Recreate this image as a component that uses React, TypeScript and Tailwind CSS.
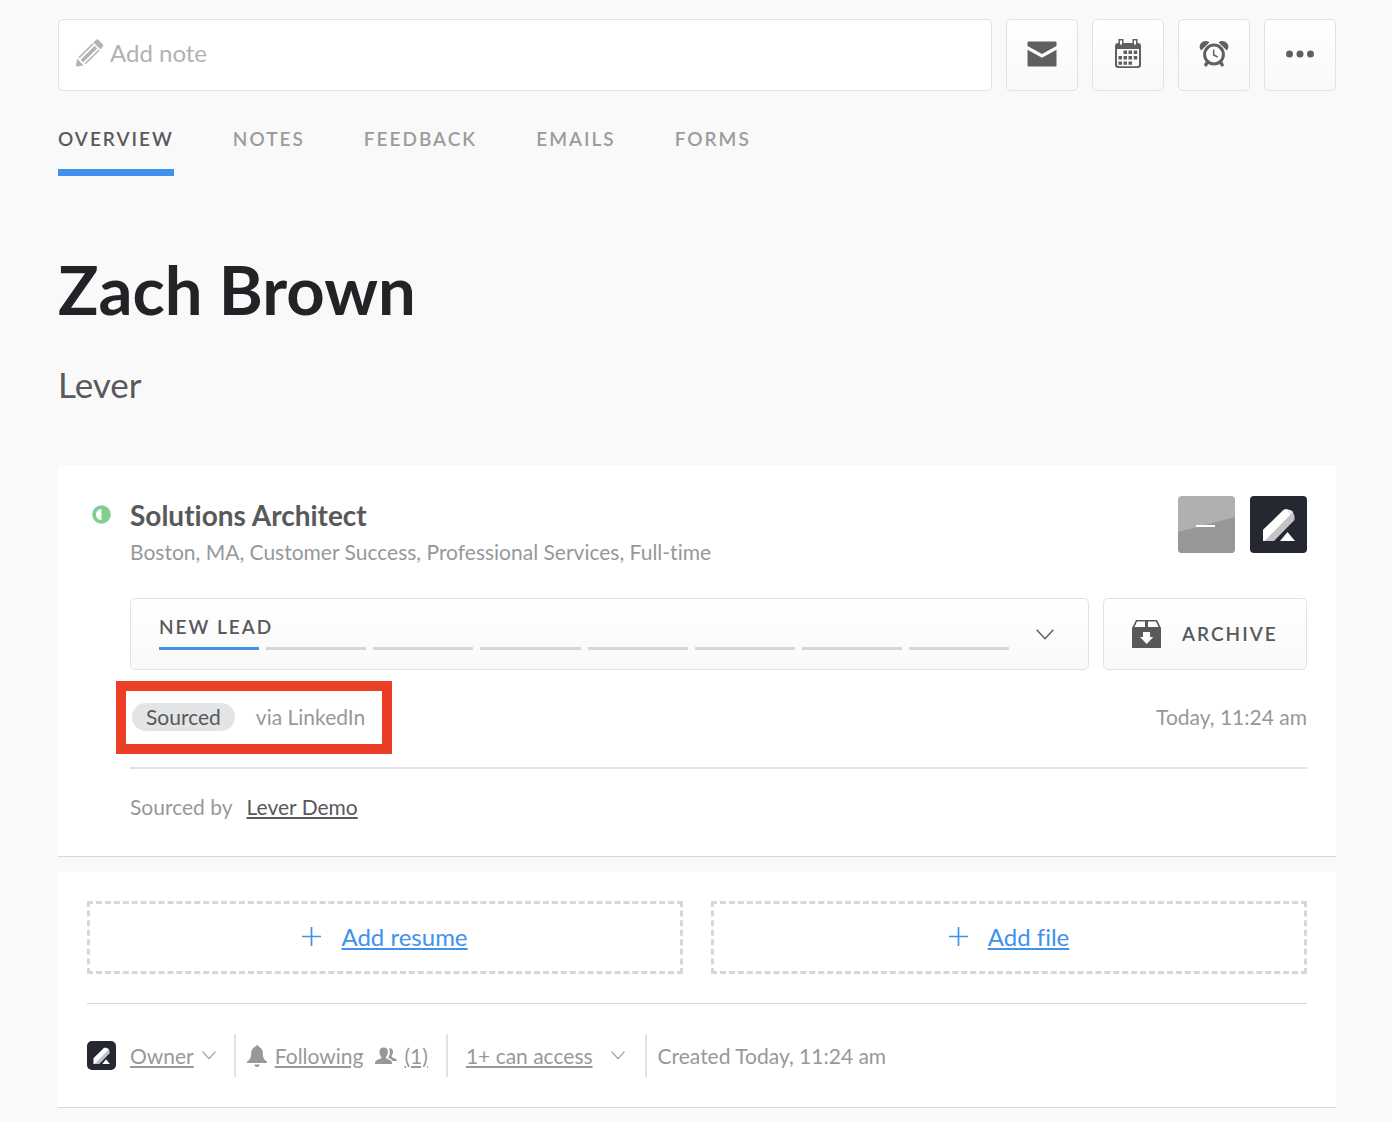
import React from 'react';
import clsx from 'clsx';

const tabs = ['Overview', 'Notes', 'Feedback', 'Emails', 'Forms'];
const stages = [
    'New lead',
    'Reached out',
    'Responded',
    'Phone screen',
    'On-site',
    'Reference check',
    'Offer',
    'Hired',
];

const PencilIcon: React.FC = () => (
    <svg
        width="28"
        height="28"
        viewBox="0 0 28 28"
        fill="currentColor"
        aria-hidden="true"
    >
        <path d="M0 27.500 1 19.500 7.500 26.500Z" />
        <path
            d="M3 18.800 17 4.900M9.200 24.800 23.200 11"
            fill="none"
            stroke="currentColor"
            strokeWidth="1.500"
        />
        <path
            d="M6 22 20 8"
            fill="none"
            stroke="currentColor"
            strokeWidth="3.800"
        />
        <path d="M17.300 3.400 20 .9Q21.300-.2 22.600 1L26.800 5.200Q27.800 6.400 26.800 7.600L24.600 10.200Z" />
    </svg>
);

const MailIcon: React.FC = () => (
    <svg
        width="30"
        height="26"
        viewBox="0 0 30 26"
        fill="currentColor"
        aria-hidden="true"
    >
        <path d="M1.500.5h27Q29.500.5 29.500 1.500V5L15 13 .5 5V1.500Q.5.5 1.500.5Z" />
        <path d="M.5 8.800 15 16.800 29.500 8.800V24.500Q29.500 25.500 28.500 25.500H1.500Q.5 25.500.5 24.500Z" />
    </svg>
);

const CalendarIcon: React.FC = () => (
    <svg
        width="26"
        height="30"
        viewBox="0 0 26 30"
        fill="currentColor"
        aria-hidden="true"
    >
        <path
            fillRule="evenodd"
            d="M3 4h20q3 0 3 3v19q0 3-3 3H3q-3 0-3-3V7q0-3 3-3ZM2 10v15.500Q2 27.300 3.800 27.300H22.200Q24 27.300 24 25.500V10Z"
        />
        <path d="M3.500 0h5v6.500h-5ZM17.500 0h5v6.500h-5Z" />
        <path d="M5 1.500h2v4H5ZM19 1.500h2v4H19Z" fill="#fff" />
        <path d="M8.500 11.500h3.500v3.500H8.500ZM13.500 11.500H17v3.500h-3.500ZM18.700 11.500h3.500v3.500h-3.500ZM3.500 17H7v3.500H3.500ZM8.500 17h3.500v3.500H8.500ZM13.500 17H17v3.500h-3.500ZM18.700 17h3.500v3.500h-3.500ZM3.500 22.500H7v3.200H3.500ZM8.500 22.500h3.500v3.200H8.500ZM13.500 22.500H17v3.200h-3.500Z" />
    </svg>
);

const AlarmIcon: React.FC = () => (
    <svg
        width="30"
        height="28"
        viewBox="0 0 30 28"
        fill="none"
        stroke="currentColor"
        aria-hidden="true"
    >
        <circle cx="15" cy="14.500" r="9.400" strokeWidth="3" />
        <path d="M14.700 9.500v5.500l4 2" strokeWidth="1.500" />
        <path
            d="M8.300 22.300 6.800 24.800M21.700 22.300l1.500 2.500"
            strokeWidth="3.400"
            strokeLinecap="round"
        />
        <path
            d="M2.200 10.500C-.5 7 .5 3.500 3.800 1.700 6.500.5 9 1 10.300 2.500Z"
            fill="currentColor"
            stroke="none"
        />
        <path
            d="M27.800 10.500C30.500 7 29.500 3.500 26.200 1.700 23.500.5 21 1 19.700 2.500Z"
            fill="currentColor"
            stroke="none"
        />
    </svg>
);

const MoreIcon: React.FC = () => (
    <svg
        width="28"
        height="8"
        viewBox="0 0 28 8"
        fill="currentColor"
        aria-hidden="true"
    >
        <circle cx="3.500" cy="4" r="3.500" />
        <circle cx="14" cy="4" r="3.500" />
        <circle cx="24.500" cy="4" r="3.500" />
    </svg>
);

const ArchiveIcon: React.FC = () => (
    <svg
        width="29"
        height="28"
        viewBox="0 0 29 28"
        fill="currentColor"
        aria-hidden="true"
    >
        <path
            fillRule="evenodd"
            d="M4 0h21l4 8v20H0V8ZM5 1.500 2.500 7H13V1.500ZM16 1.500V7H26.500L24 1.500ZM11 12v5H8l6.700 7 6.600-7h-3.200v-5Z"
        />
    </svg>
);

const StatusIcon: React.FC = () => (
    <svg
        width="19"
        height="19"
        viewBox="0 0 19 19"
        role="img"
        aria-label="Active"
    >
        <circle cx="9.500" cy="9.500" r="9.300" fill="#7fcf90" />
        <path d="M9.500 4a5.500 5.500 0 0 0 0 11Z" fill="#fff" />
    </svg>
);

const BellIcon: React.FC = () => (
    <svg
        width="20"
        height="22"
        viewBox="0 0 20 22"
        fill="currentColor"
        aria-hidden="true"
    >
        <path d="M10 0q1.500 0 1.800 1.800Q15.600 3.200 15.800 8c.2 5 1 6.300 4.200 8.700V18H0v-1.300C3.200 14.300 4 13 4.200 8 4.400 3.200 8.200 1.800 8.200 1.800 8.500 0 10 0Z" />
        <path d="M7.500 19.500h5a2.500 2.500 0 0 1-5 0Z" />
    </svg>
);

const PeopleIcon: React.FC = () => (
    <svg
        width="22"
        height="18"
        viewBox="0 0 22 18"
        fill="currentColor"
        aria-hidden="true"
    >
        <path d="M8.700.5c3 0 4.500 1.800 4.200 4.800-.1 2.200-1 3.600-1.900 4.500v1.500c1 1 6 1.500 6 4.700V17H0v-1c0-3.200 5.200-3.700 6.200-4.700V9.800C5.300 8.900 4.600 7.500 4.500 5.300 4.200 2.300 5.700.5 8.700.5Z" />
        <path d="M14 1.300c2.800-.3 4.300 1.400 4 4-.1 1.800-.8 2.700-1.300 3.500v1.300c1 1 5.300 1.400 5.300 3.900h-4.300c-1-1.800-3.500-2.500-4.500-3.200 1.700-2.600 2.400-6.400.8-9.500Z" />
    </svg>
);

const ChevronIcon: React.FC<{ className?: string }> = ({ className }) => (
    <svg
        viewBox="0 0 18 11"
        fill="none"
        stroke="currentColor"
        strokeWidth="1.400"
        className={className}
        aria-hidden="true"
    >
        <path d="M.7.8 9 9.800 17.300.8" />
    </svg>
);

const PlusIcon: React.FC = () => (
    <svg
        width="19"
        height="19"
        viewBox="0 0 19 19"
        stroke="currentColor"
        strokeWidth="1.700"
        aria-hidden="true"
    >
        <path d="M9.500 0v19M0 9.500h19" />
    </svg>
);

const LeverLogo: React.FC<{ className?: string }> = ({ className }) => (
    <svg viewBox="0 0 57 57" className={className} aria-hidden="true">
        <path
            d="M13 34 33.500 14Q35 12.800 37 13.300L41 14.500Q42.500 15 43 16.500L44.500 20V24L24 45H13Z"
            fill="#c3c5c8"
        />
        <path
            d="M13 34 33.500 14Q35 12.800 37 13.300L40.500 18.500 14.500 45H13Z"
            fill="#fff"
        />
        <path
            d="M37 13.300 41 14.500Q42.500 15 43 16.500L40.500 18.500Z"
            fill="#e9eaeb"
        />
        <path d="M37.500 36 45 45H30Z" fill="#fff" />
    </svg>
);

const ToolbarButton: React.FC<{
    label: string;
    children: React.ReactNode;
}> = ({ label, children }) => (
    <button
        type="button"
        aria-label={label}
        className="flex size-[72px] shrink-0 items-center justify-center rounded-[5px] border border-[#e1e2e3] bg-linear-to-b from-white to-[#f9f9f9] pb-0.5 text-[#5f6062]"
    >
        {children}
    </button>
);

const Toolbar: React.FC = () => (
    <div className="flex gap-[14px]">
        <label className="flex h-[72px] min-w-0 flex-1 items-center gap-[6px] rounded-[5px] border border-[#e1e2e3] bg-white px-[17px] pb-1 text-[#b1b2b3]">
            <PencilIcon />
            <input
                type="text"
                aria-label="Add note"
                placeholder="Add note"
                className="min-w-0 flex-1 bg-transparent text-[24px] leading-8 text-[#58595b] outline-none placeholder:text-[#b1b2b3]"
            />
        </label>
        <ToolbarButton label="Send email">
            <MailIcon />
        </ToolbarButton>
        <ToolbarButton label="Schedule">
            <CalendarIcon />
        </ToolbarButton>
        <ToolbarButton label="Snooze">
            <AlarmIcon />
        </ToolbarButton>
        <ToolbarButton label="More">
            <MoreIcon />
        </ToolbarButton>
    </div>
);

const Tabs: React.FC = () => (
    <nav className="mt-[33px] flex gap-[59px]">
        {tabs.map((tab, i) => (
            <a
                key={tab}
                href={`#${tab.toLowerCase()}`}
                className={clsx(
                    'border-b-[7px] pb-[15px] text-[19px] leading-[30px] font-semibold tracking-[2px] uppercase',
                    i === 0
                        ? 'border-[#4191ee] text-[#58595b]'
                        : 'border-transparent text-[#9b9c9d]'
                )}
            >
                {tab}
            </a>
        ))}
    </nav>
);

const JobCard: React.FC = () => (
    <section className="flex border-b border-[#d6d7d8] bg-white pt-[31px] pr-[29px] pl-[34px]">
        <div className="w-[38px] shrink-0 pt-[9px]">
            <StatusIcon />
        </div>
        <div className="min-w-0 flex-1">
            <div className="flex items-start justify-between">
                <div>
                    <h2 className="text-[28px] leading-[38px] font-bold text-[#58595b]">
                        Solutions Architect
                    </h2>
                    <p className="text-[21px] leading-9 text-[#97989a]">
                        Boston, MA, Customer Success, Professional Services,
                        Full-time
                    </p>
                </div>
                <div className="flex gap-[15px]">
                    <span className="flex size-[57px] overflow-hidden rounded-[4px] bg-[#b0b0b2]">
                        <svg viewBox="0 0 57 57" aria-hidden="true">
                            <path d="M0 36 57 21V57H0Z" fill="#969799" />
                            <path d="M18 29h19v2H18Z" fill="#fff" />
                        </svg>
                    </span>
                    <span className="size-[57px] overflow-hidden rounded-[4px] bg-[#252830]">
                        <LeverLogo />
                    </span>
                </div>
            </div>

            <div className="mt-7 flex gap-[14px]">
                <button
                    type="button"
                    className="flex h-[72px] flex-1 items-center gap-[27px] rounded-[5px] border border-[#e1e2e3] bg-linear-to-b from-white to-[#f9f9f9] pr-[34px] pl-[28px] text-left text-[#58595b]"
                >
                    <span className="flex-1 pb-[6px]">
                        <span className="block text-[19px] leading-[30px] font-semibold tracking-[2px] uppercase">
                            {stages[0]}
                        </span>
                        <span className="mt-[5px] flex gap-[7px]">
                            {stages.map((stage, i) => (
                                <span
                                    key={stage}
                                    className={clsx(
                                        'h-[3px] flex-1',
                                        i === 0
                                            ? 'bg-[#4191ee]'
                                            : 'bg-[#d6d7d7]'
                                    )}
                                />
                            ))}
                        </span>
                    </span>
                    <ChevronIcon className="w-[18px]" />
                </button>
                <button
                    type="button"
                    className="flex h-[72px] w-[204px] items-center gap-[21px] rounded-[5px] border border-[#e1e2e3] bg-linear-to-b from-white to-[#f9f9f9] pl-[28px] text-[19px] font-semibold tracking-[2px] text-[#58595b] uppercase"
                >
                    <ArchiveIcon />
                    Archive
                </button>
            </div>

            <div className="flex h-[99px] items-center justify-between border-b-2 border-[#e1e2e3] pb-1 text-[21px] leading-7 text-[#97989a]">
                <div className="relative flex items-center gap-[21px] pl-[2px]">
                    <span className="rounded-full bg-[#e3e4e6] px-[14px] text-[#58595b]">
                        Sourced
                    </span>
                    <span>via LinkedIn</span>
                    <span className="pointer-events-none absolute -top-[22px] -right-[27px] -bottom-[23px] -left-[14px] border-[10px] border-[#ea3f25]" />
                </div>
                <time>Today, 11:24 am</time>
            </div>

            <div className="flex h-[87px] items-center gap-[14px] pb-3 text-[21px] leading-7 text-[#97989a]">
                <span>Sourced by</span>
                <a
                    href="#lever-demo"
                    className="text-[#58595b] underline decoration-2 underline-offset-2"
                >
                    Lever Demo
                </a>
            </div>
        </div>
    </section>
);

const UploadButton: React.FC<{ label: string }> = ({ label }) => (
    <button
        type="button"
        className="flex h-[73px] flex-1 items-center justify-center gap-[20px] border-[3px] border-dashed border-[#d6d7d8] pb-0.5 text-[24px] text-[#4191ee]"
    >
        <PlusIcon />
        <span className="underline decoration-2 underline-offset-2">
            {label}
        </span>
    </button>
);

const FooterLink: React.FC<{ children: React.ReactNode }> = ({ children }) => (
    <button
        type="button"
        className="underline decoration-2 underline-offset-2"
    >
        {children}
    </button>
);

const FilesCard: React.FC = () => (
    <section className="mt-[15px] border-b border-[#d6d7d8] bg-white px-[29px] pt-[29px]">
        <div className="flex gap-[28px] border-b border-[#d6d7d8] pb-[29px]">
            <UploadButton label="Add resume" />
            <UploadButton label="Add file" />
        </div>
        <div className="flex h-[103px] items-center text-[21px] leading-7 text-[#97989a]">
            <div className="flex h-[43px] items-center pr-[18px]">
                <span className="mr-[14px] size-[29px] overflow-hidden rounded-[5px] bg-[#252830]">
                    <LeverLogo />
                </span>
                <FooterLink>Owner</FooterLink>
                <ChevronIcon className="ml-2 w-[14px]" />
            </div>
            <div className="flex h-[43px] items-center border-l-2 border-[#e1e2e3] pr-[18px] pl-[11px]">
                <span className="mr-2">
                    <BellIcon />
                </span>
                <FooterLink>Following</FooterLink>
                <span className="mr-[7px] ml-3">
                    <PeopleIcon />
                </span>
                <FooterLink>(1)</FooterLink>
            </div>
            <div className="flex h-[43px] items-center border-l-2 border-[#e1e2e3] pr-[20px] pl-[18px]">
                <FooterLink>1+ can access</FooterLink>
                <ChevronIcon className="ml-[18px] w-[14px]" />
            </div>
            <div className="flex h-[43px] items-center border-l-2 border-[#e1e2e3] pl-[11px]">
                Created Today, 11:24 am
            </div>
        </div>
    </section>
);

export default function App() {
    return (
        <main className="min-h-screen bg-[#f9f9f9] pt-[19px] pr-14 pb-[14px] pl-[58px] font-['Lato','Noto_Sans',sans-serif] [font-variant-ligatures:none]">
            <Toolbar />
            <Tabs />
            <h1 className="mt-[70px] text-[67px] leading-[86px] font-bold text-[#222326]">
                Zach Brown
            </h1>
            <p className="mt-7 mb-[57px] text-[35px] leading-[48px] text-[#58595b]">
                Lever
            </p>
            <JobCard />
            <FilesCard />
        </main>
    );
}
